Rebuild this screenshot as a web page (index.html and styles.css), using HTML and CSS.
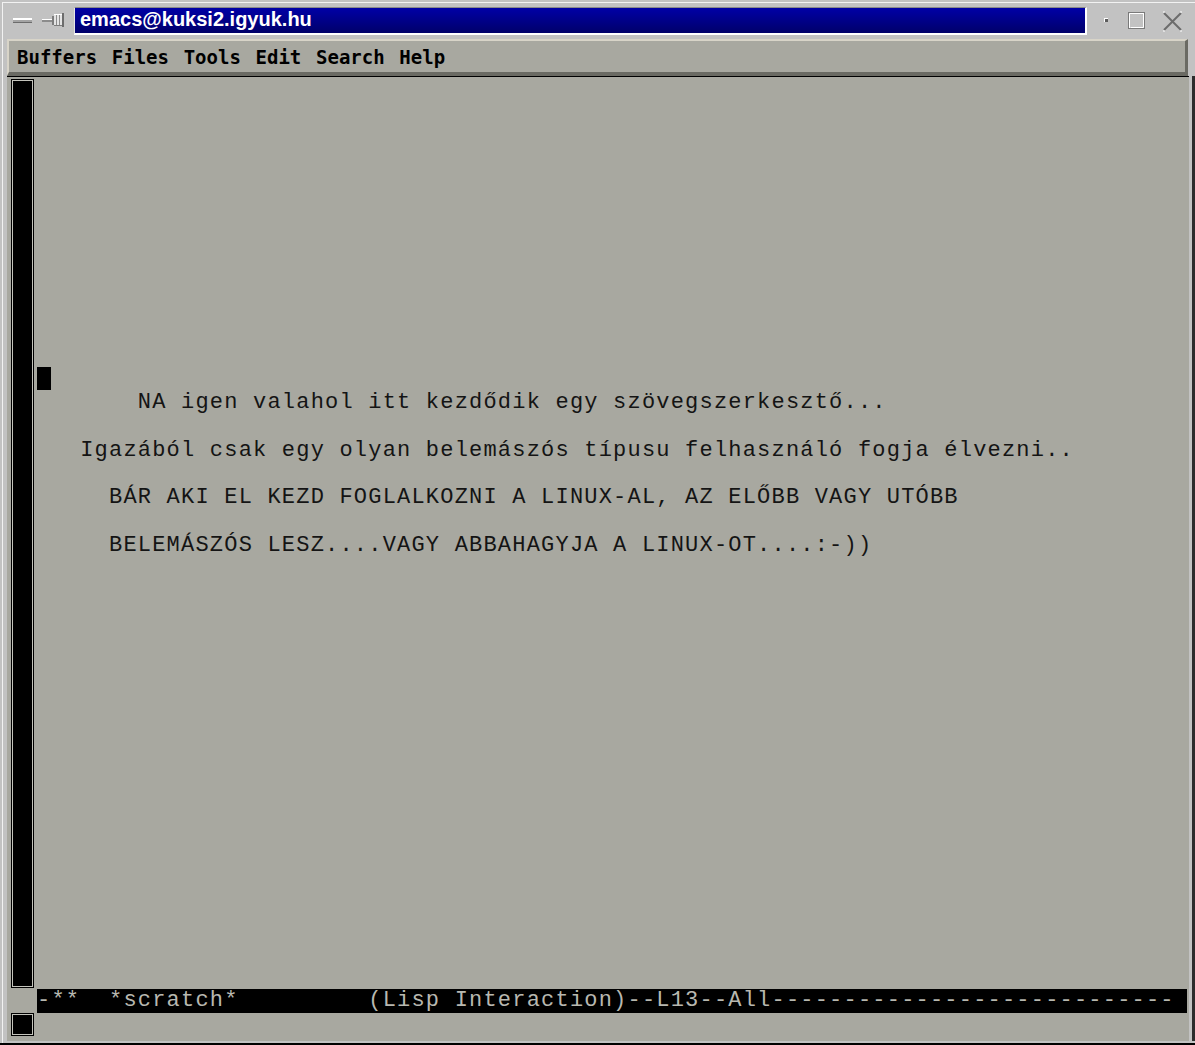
FILE: index.html
```html
<!DOCTYPE html>
<html>
    <head>
        <meta charset="UTF-8">
        <title>emacs@kuksi2.igyuk.hu</title>
        <link rel="stylesheet" href="styles.css">
    </head>
    <body>
        <div class="frame">
            <div class="frameInner">
                <div class="titleRow">
                    <svg class="leftButtons" width="71" height="36" viewBox="0 0 71 36">
                        <!-- minimize bar -->
                        <rect x="10" y="15" width="19" height="2" fill="#ffffff"/>
                        <rect x="10" y="17" width="19" height="2" fill="#a4a4a4"/>
                        <rect x="10" y="19" width="19" height="1" fill="#6c6c6c"/>
                        <!-- pin -->
                        <rect x="39" y="16" width="10" height="1" fill="#ffffff"/>
                        <rect x="39" y="17" width="10" height="2" fill="#8c8c8c"/>
                        <rect x="49" y="13" width="2" height="9" fill="#7c7c7c"/>
                        <rect x="51" y="11" width="9" height="12" fill="#e4e4e4"/>
                        <rect x="51" y="11" width="9" height="1" fill="#ffffff"/>
                        <rect x="51" y="22" width="9" height="1" fill="#7c7c7c"/>
                        <rect x="53" y="12" width="1" height="10" fill="#8c8c8c"/>
                        <rect x="56" y="12" width="1" height="10" fill="#8c8c8c"/>
                        <rect x="59" y="10" width="2" height="14" fill="#6c6c6c"/>
                    </svg>
                    <div class="titleBox">emacs@kuksi2.igyuk.hu</div>
                    <svg class="rightButtons" width="108" height="36" viewBox="0 0 108 36">
                        <!-- iconify dot -->
                        <rect x="17" y="15" width="4" height="4" fill="#ffffff"/>
                        <rect x="18" y="16" width="3" height="3" fill="#5c5c5c"/>
                        <!-- maximize square -->
                        <rect x="41.5" y="9.5" width="16" height="16" fill="none" stroke="#7a7a7a"/>
                        <path d="M42.5 25 V10.5 H57" fill="none" stroke="#ffffff"/>
                        <path d="M43.5 24.5 H56.5 V11" fill="none" stroke="#ffffff"/>
                        <!-- close cross -->
                        <path d="M77 10 L94 27 M94 10 L77 27" stroke="#6c6c6c" stroke-width="2"/>
                        <path d="M76 9 h2 M93 9 h2 M76 28 h2 M93 28 h2" stroke="#ffffff" stroke-width="1"/>
                    </svg>
                </div>

                <div class="menubar">
                    <span class="menuItem">Buffers</span>
                    <span class="menuItem">Files</span>
                    <span class="menuItem">Tools</span>
                    <span class="menuItem">Edit</span>
                    <span class="menuItem">Search</span>
                    <span class="menuItem">Help</span>
                </div>

                <div class="lowerRow">
                    <div class="workspace">
                        <div class="scrollCell"><div class="scrollBox"></div></div>
                        <pre class="buffer">












<span class="cursor"></span>
       NA igen valahol itt kezdődik egy szövegszerkesztő...

   Igazából csak egy olyan belemászós típusu felhasználó fogja élvezni..

     BÁR AKI EL KEZD FOGLALKOZNI A LINUX-AL, AZ ELŐBB VAGY UTÓBB

     BELEMÁSZÓS LESZ....VAGY ABBAHAGYJA A LINUX-OT....:-))</pre>
                        <div class="pad"></div>

                        <div class="scrollCell"></div>
                        <div class="modeline">-**  *scratch*         (Lisp Interaction)--L13--All----------------------------</div>
                        <div class="pad"></div>

                        <div class="scrollCell"><div class="miniBox"></div></div>
                        <div class="minibuffer"></div>
                        <div class="pad"></div>
                    </div>
                    <div class="edgeGap"></div>
                    <div class="edge"></div>
                </div>
            </div>
        </div>
    </body>
</html>
```

FILE: styles.css
```css
html, body {
    margin: 0px;
    padding: 0px;
    background-color: #000;
    overflow: hidden;
}

.frame {
    width: 1195px;
    height: 1043px;
    padding: 2px 0px 0px 2px;
    box-sizing: border-box;
    background-color: #c2c2c2;
}

.frameInner {
    height: 100%;
    border-top: 1px solid #f2f2f2;
    border-left: 1px solid #f2f2f2;
}

.titleRow {
    display: flex;
    align-items: flex-start;
    height: 36px;
}

.leftButtons, .rightButtons {
    display: block;
    flex: none;
}

.titleBox {
    flex: none;
    width: 1013px;
    height: 28px;
    margin-top: 4px;
    box-sizing: border-box;
    padding-left: 5px;
    border-top: 1px solid #8a8a8a;
    border-left: 1px solid #e6e6e6;
    border-right: 2px solid #ffffff;
    border-bottom: 2px solid #ffffff;
    background: linear-gradient(#0000a6, #00006a);
    color: #fff;
    font-family: "Liberation Sans", Arial, sans-serif;
    font-weight: bold;
    font-size: 20px;
    line-height: 23px;
}

.menubar {
    display: flex;
    gap: 14.7px;
    width: 1181px;
    height: 37px;
    margin-left: 4px;
    box-sizing: border-box;
    padding: 1px 0px 0px 8px;
    background-color: #a8a8a0;
    border-top: 2px solid #d8d4c8;
    border-left: 2px solid #d8d4c8;
    border-bottom: 4px solid #6a6a63;
    border-right: 3px solid #6a6a63;
    font-family: "DejaVu Sans Mono", monospace;
    font-weight: bold;
    font-size: 19px;
    line-height: 30px;
    color: #000;
}

.lowerRow {
    display: flex;
    padding-left: 4px;
}

.workspace {
    display: grid;
    grid-template-columns: 30px 1150px 2px;
    grid-template-rows: 912px 24px 28px;
    width: 1182px;
    border-top: 1px solid #000;
    background-color: #a8a8a0;
}

.edgeGap {
    width: 3px;
}

.edge {
    width: 3px;
    background-color: #2c2c2c;
}

.scrollBox, .miniBox {
    width: 23px;
    margin-left: 4px;
    box-sizing: border-box;
    background-color: #000;
    border: 1px solid #000;
    outline: 1px solid #c4c4bc;
    outline-offset: -2px;
}

.scrollBox {
    height: 909px;
    margin-top: 2px;
}

.miniBox {
    height: 23px;
}

.buffer {
    margin: 0px;
    padding-top: 3px;
    overflow: hidden;
    font-family: "Liberation Mono", "DejaVu Sans Mono", monospace;
    font-size: 22px;
    letter-spacing: 1.2px;
    line-height: 23.9px;
    color: #141414;
}

.cursor {
    display: inline-block;
    width: 14px;
    height: 23px;
    vertical-align: top;
    background-color: #000;
}

.modeline {
    overflow: hidden;
    white-space: pre;
    background-color: #000;
    color: #b8b8b0;
    font-family: "Liberation Mono", "DejaVu Sans Mono", monospace;
    font-size: 22px;
    letter-spacing: 1.2px;
    line-height: 24px;
}
```
